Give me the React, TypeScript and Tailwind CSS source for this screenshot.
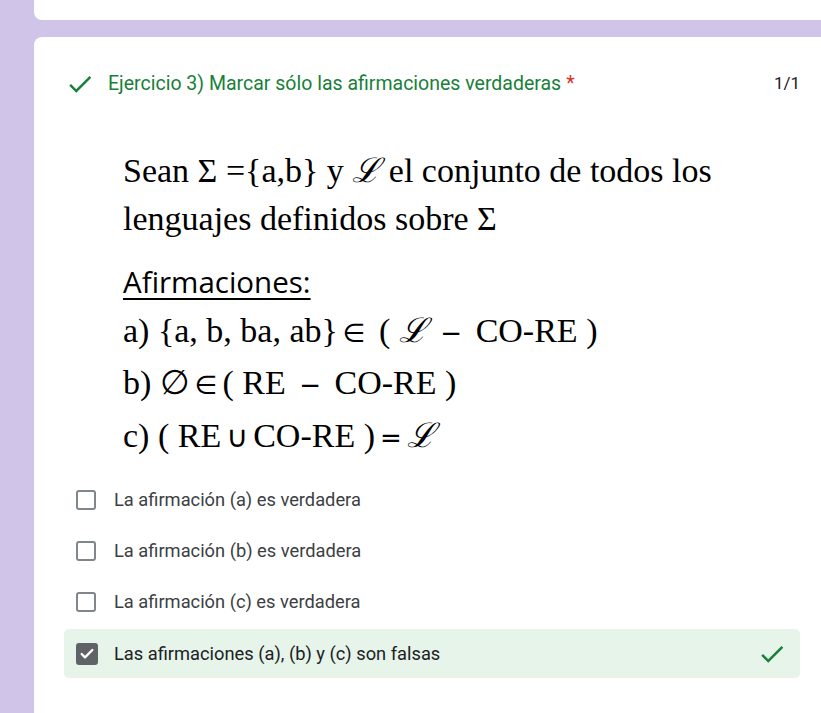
import {Check} from 'lucide-react'

const options = [
  'La afirmación (a) es verdadera',
  'La afirmación (b) es verdadera',
  'La afirmación (c) es verdadera',
]

function GreenCheck({className = ''}: {className?: string}) {
  return (
    <svg viewBox="0 0 24 24" className={className} fill="#188038">
      <path d="M9 16.17 4.83 12l-1.42 1.41L9 19 21 7l-1.41-1.41z" />
    </svg>
  )
}

function Script() {
  return (
    <span className="italic text-[34px]" style={{fontFamily: '"DejaVu Serif", serif'}}>
      ℒ
    </span>
  )
}

function Op({children, size = 'text-[26px]'}: {children: string; size?: string}) {
  return (
    <span className={`${size} px-[5px]`} style={{fontFamily: '"DejaVu Sans", sans-serif'}}>
      {children}
    </span>
  )
}

export default function App() {
  return (
    <div className="min-h-[713px] bg-[#d1c4e9] overflow-hidden" style={{fontFamily: 'Roboto, sans-serif'}}>
      {/* previous card */}
      <div className="ml-[34px] h-[20px] bg-white rounded-bl-lg"></div>

      {/* question card */}
      <div className="ml-[34px] mt-[17px] bg-white rounded-tl-lg min-h-[676px] pl-[32px] pr-[21px] pt-[31px]">
        {/* Header */}
        <div className="flex items-center h-[32px]">
          <GreenCheck className="w-[30px] h-[30px] -ml-[1px]" />
          <div className="ml-[13px] text-[19.5px] text-[#188038] leading-none">
            Ejercicio 3) Marcar sólo las afirmaciones verdaderas
            <span className="text-[#d93025] ml-[5px]">*</span>
          </div>
          <div className="ml-auto text-[17px] text-[#202124]">1/1</div>
        </div>

        {/* Statement */}
        <div className="pl-[57px] pt-[46px] text-black">
          <div className="text-[34px] leading-[48px]" style={{fontFamily: '"Liberation Serif", serif'}}>
            <div>Sean Σ ={'{'}a,b{'}'} y <Script /> el conjunto de todos los</div>
            <div>lenguajes definidos sobre Σ</div>
          </div>
          <div className="mt-[19px] text-[29.5px] leading-[40px] underline underline-offset-[5px] decoration-[2px]" style={{fontFamily: '"Open Sans", sans-serif'}}>
            Afirmaciones:
          </div>
          <div className="text-[34px] leading-[50px] mt-[3px] whitespace-pre" style={{fontFamily: '"Liberation Serif", serif'}}>
            <div>a) {'{'}a, b, ba, ab{'}'}<Op>∈</Op> ( <Script /> <Op>−</Op> CO-RE )</div>
            <div>b) ∅<Op>∈</Op>( RE <Op>−</Op> CO-RE )</div>
            <div>c) ( RE<Op size="text-[30px]">∪</Op>CO-RE )<Op>=</Op><Script /></div>
          </div>
        </div>

        {/* Options */}
        <div className="mt-[11px] flex flex-col">
          {options.map((o) => (
            <div key={o} className="flex items-center h-[51px] pl-[10px]">
              <div className="w-[20px] h-[20px] border-2 border-[#80868b] rounded-[3px]"></div>
              <div className="ml-[18px] text-[18.3px] text-[#3c4043]">{o}</div>
            </div>
          ))}
          <div className="flex items-center h-[49px] -ml-[2px] mt-[2px] pl-[12px] pr-[13px] bg-[#e6f4ea] rounded-[5px]">
            <div className="w-[22px] h-[22px] bg-[#5f6368] rounded-[3px] flex items-center justify-center">
              <Check className="w-[16px] h-[16px] text-white" strokeWidth={3.5} />
            </div>
            <div className="ml-[16px] text-[18.3px] text-[#202124]">Las afirmaciones (a), (b) y (c) son falsas</div>
            <GreenCheck className="ml-auto w-[30px] h-[30px]" />
          </div>
        </div>
      </div>
    </div>
  )
}
